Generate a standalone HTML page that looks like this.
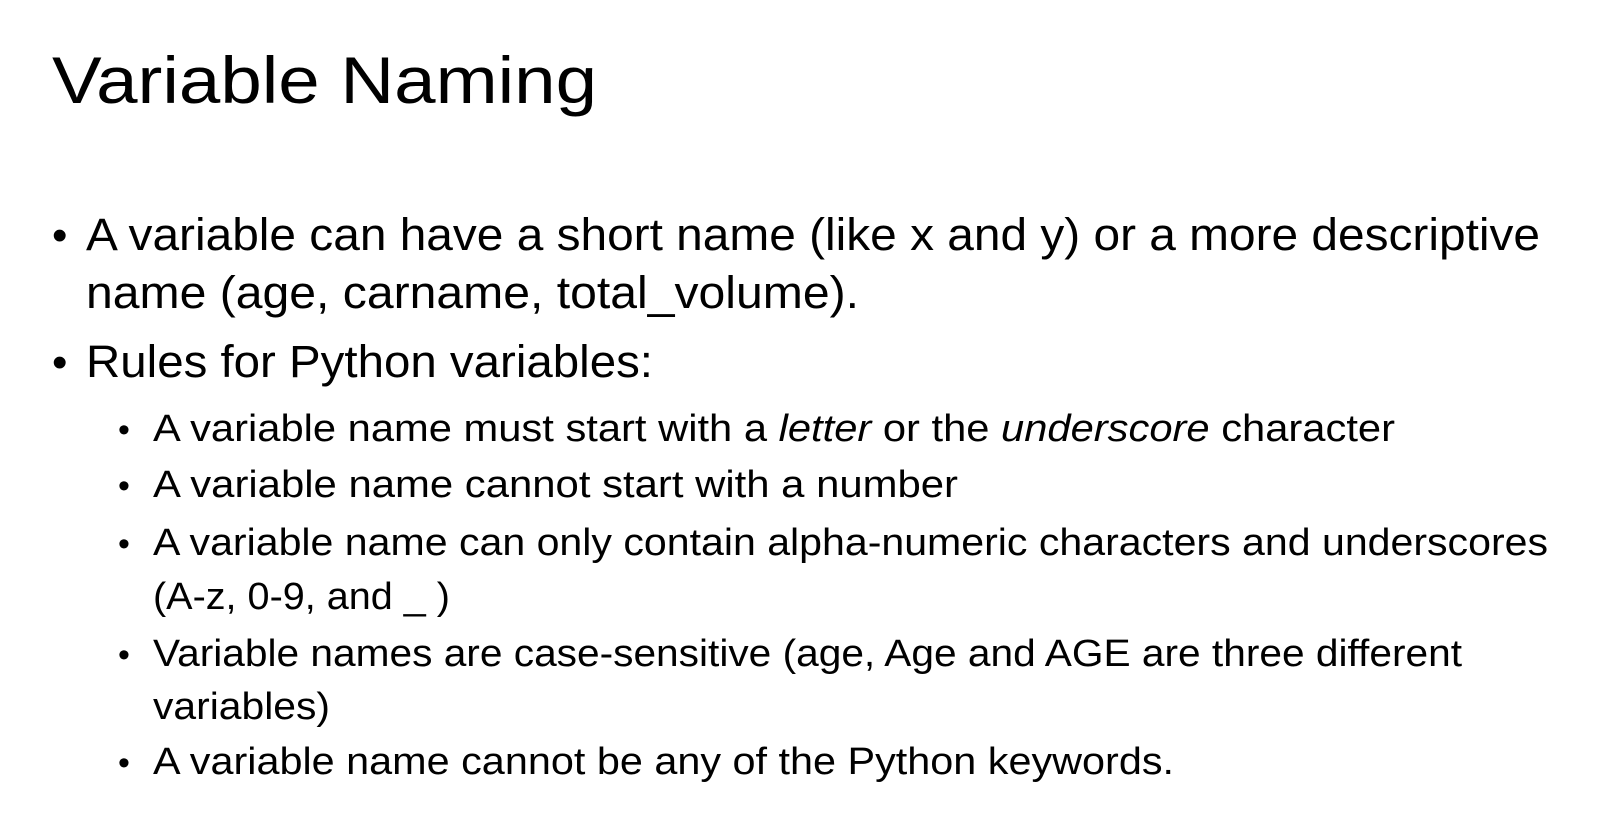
<!DOCTYPE html>
<html><head><meta charset="utf-8"><style>
html,body{margin:0;padding:0;background:#fff;}
svg{display:block;}
text{font-family:"Liberation Sans",sans-serif;fill:#000;}
</style></head><body>
<svg width="1618" height="824" viewBox="0 0 1618 824" xmlns="http://www.w3.org/2000/svg">
<text x="52" y="103" font-size="66" textLength="545" lengthAdjust="spacingAndGlyphs">Variable Naming</text>

<text x="52" y="250" font-size="44">•</text>
<text x="86" y="250" font-size="45" textLength="1454" lengthAdjust="spacingAndGlyphs">A variable can have a short name (like x and y) or a more descriptive</text>
<text x="86" y="308" font-size="45" textLength="773" lengthAdjust="spacingAndGlyphs">name (age, carname, total_volume).</text>

<text x="52" y="377" font-size="44">•</text>
<text x="86" y="377" font-size="45" textLength="567" lengthAdjust="spacingAndGlyphs">Rules for Python variables:</text>

<g font-size="38">
<text x="118" y="441" font-size="34">•</text>
<text x="153" y="441" textLength="1242" lengthAdjust="spacingAndGlyphs">A variable name must start with a <tspan font-style="italic">letter</tspan> or the <tspan font-style="italic">underscore</tspan> character</text>
<text x="118" y="497" font-size="34">•</text>
<text x="153" y="497" textLength="805" lengthAdjust="spacingAndGlyphs">A variable name cannot start with a number</text>
<text x="118" y="555" font-size="34">•</text>
<text x="153" y="555" textLength="1395" lengthAdjust="spacingAndGlyphs">A variable name can only contain alpha-numeric characters and underscores</text>
<text x="153" y="609" textLength="297" lengthAdjust="spacingAndGlyphs">(A-z, 0-9, and _ )</text>
<text x="118" y="666" font-size="34">•</text>
<text x="153" y="666" textLength="1309" lengthAdjust="spacingAndGlyphs">Variable names are case-sensitive (age, Age and AGE are three different</text>
<text x="153" y="719" textLength="177" lengthAdjust="spacingAndGlyphs">variables)</text>
<text x="118" y="774" font-size="34">•</text>
<text x="153" y="774" textLength="1021" lengthAdjust="spacingAndGlyphs">A variable name cannot be any of the Python keywords.</text>
</g>
</svg>
</body></html>
